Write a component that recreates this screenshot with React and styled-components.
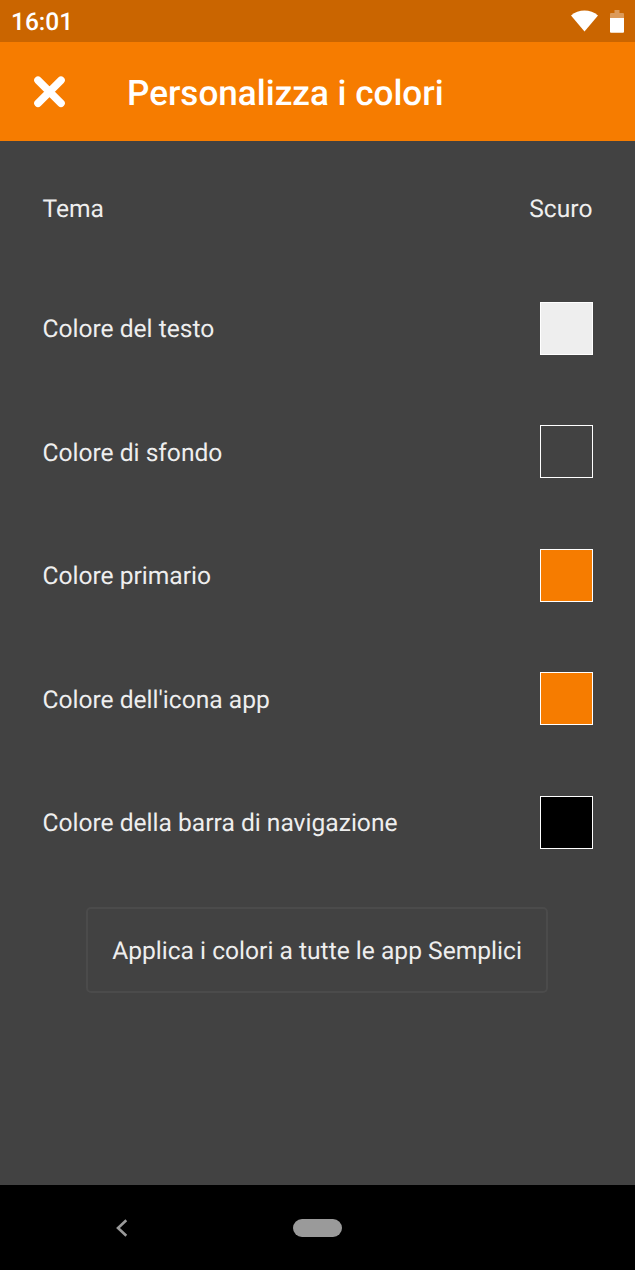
import React from 'react';
import styled, { createGlobalStyle } from 'styled-components';

const Global = createGlobalStyle`
  * { box-sizing: border-box; }
  body {
    margin: 0;
    background: #424242;
    font-family: Roboto, sans-serif;
    text-rendering: geometricPrecision;
  }
`;
const Screen = styled.div`
  display: flex;
  flex-direction: column;
  width: 635px;
  height: 1270px;
  background: #424242;
  color: #eeeeee;
  overflow: hidden;
`;
const StatusBar = styled.div`
  display: flex;
  justify-content: space-between;
  align-items: center;
  flex: none;
  height: 42px;
  padding: 2px 11px 0 11px;
  background: #ca6500;
  color: #fff;
`;
const Clock = styled.span`
  font-size: 24.5px;
  font-weight: 500;
  line-height: 38px;
`;
const StatusIcons = styled.div`
  display: flex;
  gap: 12px;
  margin-bottom: 1px;
`;
const Header = styled.header`
  display: flex;
  align-items: center;
  flex: none;
  height: 99px;
  padding-left: 33px;
  background: #f67c00;
  color: #fff;
`;
const Title = styled.h1`
  margin: 3px 0 0 61px;
  font-size: 35.1px;
  font-weight: 500;
  line-height: 42px;
  white-space: nowrap;
`;
const Content = styled.main`
  display: flex;
  flex-direction: column;
  flex: 1;
`;
const Row = styled.div`
  display: flex;
  flex: none;
  align-items: center;
  justify-content: space-between;
  height: 123.5px;
  padding: 0 42px 0 42.4px;
`;
const ThemeRow = styled(Row)`
  height: 125.4px;
  padding: 8px 42.6px 0 42.4px;
`;
const Label = styled.span`
  padding-top: 4px;
  font-size: 24.6px;
  line-height: 30px;
  white-space: nowrap;
`;
const Swatch = styled.div`
  width: 53px;
  height: 53px;
  border: 1px solid #fff;
  background: ${({ $color }) => $color};
`;
const ApplyButton = styled.button`
  align-self: center;
  flex: none;
  width: 462px;
  height: 86px;
  margin: 23px 1px 0 0;
  padding: 5px 0 0;
  border: 2px solid #4b4b4b;
  border-radius: 5px;
  background: transparent;
  color: #eeeeee;
  font: 400 24.6px/30px Roboto, sans-serif;
  text-rendering: inherit;
  white-space: nowrap;
`;
const NavBar = styled.nav`
  display: flex;
  align-items: center;
  flex: none;
  height: 85px;
  padding-left: 115px;
  background: #000;
`;
const HomePill = styled.div`
  width: 49px;
  height: 18px;
  margin-left: 165px;
  border-radius: 9px;
  background: #9a9a9a;
`;

const colors = [
  ['Colore del testo', '#eeeeee'],
  ['Colore di sfondo', '#424242'],
  ['Colore primario', '#f67c00'],
  ["Colore dell'icona app", '#f67c00'],
  ['Colore della barra di navigazione', '#000000'],
];

export default function App() {
  return (
    <Screen>
      <Global />
      <StatusBar>
        <Clock>16:01</Clock>
        <StatusIcons>
          <svg width="27" height="24" viewBox="0 0 27 24">
            <path d="M0 5.6C7.5-1.1 19.5-1.1 27 5.6L13.5 21.5Z" fill="#fff" />
          </svg>
          <svg width="14" height="24" viewBox="0 0 14 24">
            <path d="M4.5 0h5v3H13q1 0 1 1v4H0V4q0-1 1-1h3.5Z" fill="#fff" opacity=".35" />
            <path d="M0 8h14V21.7q0 1-1 1H1q-1 0-1-1Z" fill="#fff" />
          </svg>
        </StatusIcons>
      </StatusBar>
      <Header>
        <svg width="33" height="33" viewBox="0 0 33 33">
          <path d="M5 5.3l23 23M28 5.3l-23 23" stroke="#fff" strokeWidth="7.6" strokeLinecap="round" />
        </svg>
        <Title>Personalizza i colori</Title>
      </Header>
      <Content>
        <ThemeRow>
          <Label>Tema</Label>
          <Label>Scuro</Label>
        </ThemeRow>
        {colors.map(([name, color]) => (
          <Row key={name}>
            <Label>{name}</Label>
            <Swatch $color={color} />
          </Row>
        ))}
        <ApplyButton>Applica i colori a tutte le app Semplici</ApplyButton>
      </Content>
      <NavBar>
        <svg width="13" height="18" viewBox="0 0 13 18">
          <path d="M11.3 1.3L3 9l8.3 7.7" fill="none" stroke="#9a9a9a" strokeWidth="2.6" />
        </svg>
        <HomePill />
      </NavBar>
    </Screen>
  );
}
